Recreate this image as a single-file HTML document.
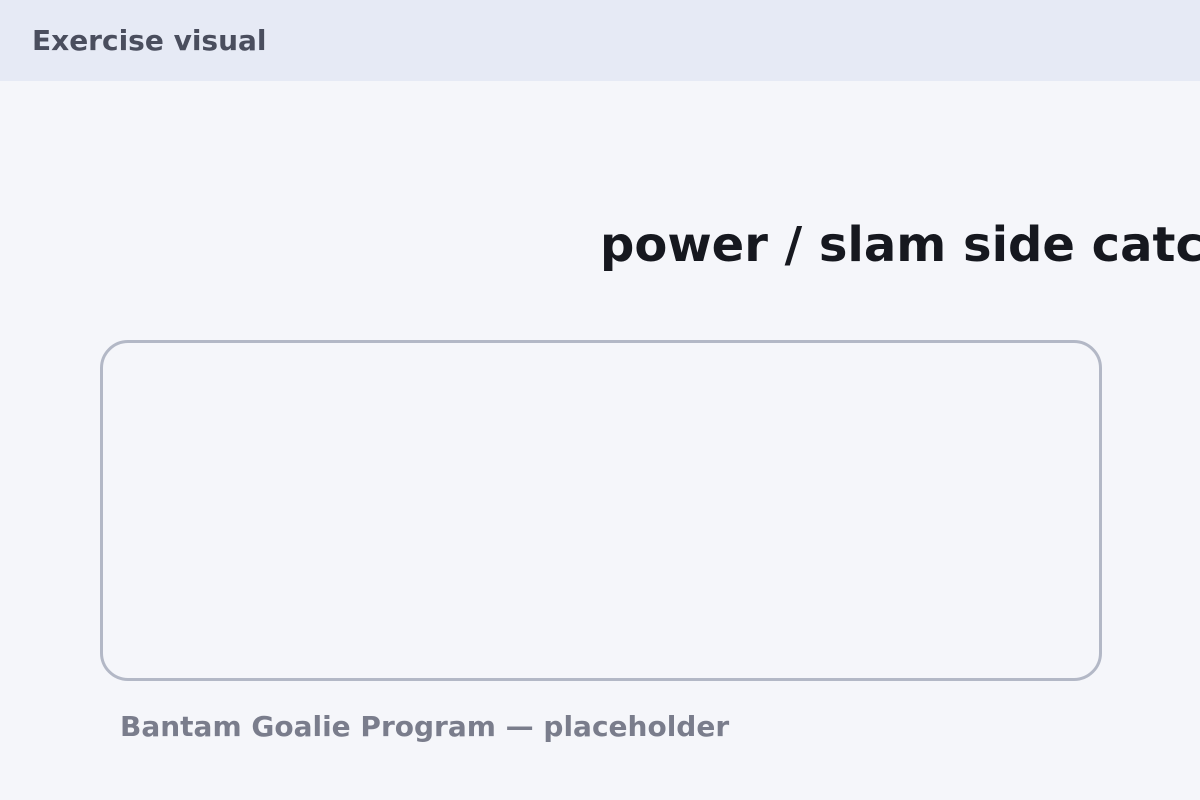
<!DOCTYPE html>
<html><head><meta charset="utf-8"><style>
html,body{margin:0;padding:0;}
body{width:1200px;height:800px;background:#f5f6fa;position:relative;overflow:hidden;font-family:"DejaVu Sans","Liberation Sans",sans-serif;font-weight:bold;}
.hdr{position:absolute;left:0;top:0;width:1200px;height:81px;background:#e6eaf5;}
.hdr span{position:absolute;left:32px;top:24px;font-size:28px;color:#4a4e5e;line-height:34px;white-space:nowrap;}
.title{position:absolute;left:600px;top:215px;font-size:48px;line-height:60px;color:#16181f;white-space:nowrap;}
.box{position:absolute;left:100px;top:340px;width:996px;height:335px;border:3px solid #b3b8c6;border-radius:28px;}
.foot{position:absolute;left:120px;top:710px;font-size:28px;line-height:34px;color:#7a7d8c;white-space:nowrap;}
</style></head><body>
<div class="hdr"><span>Exercise visual</span></div>
<div class="title">power / slam side catch</div>
<div class="box"></div>
<div class="foot">Bantam Goalie Program — placeholder</div>
</body></html>
